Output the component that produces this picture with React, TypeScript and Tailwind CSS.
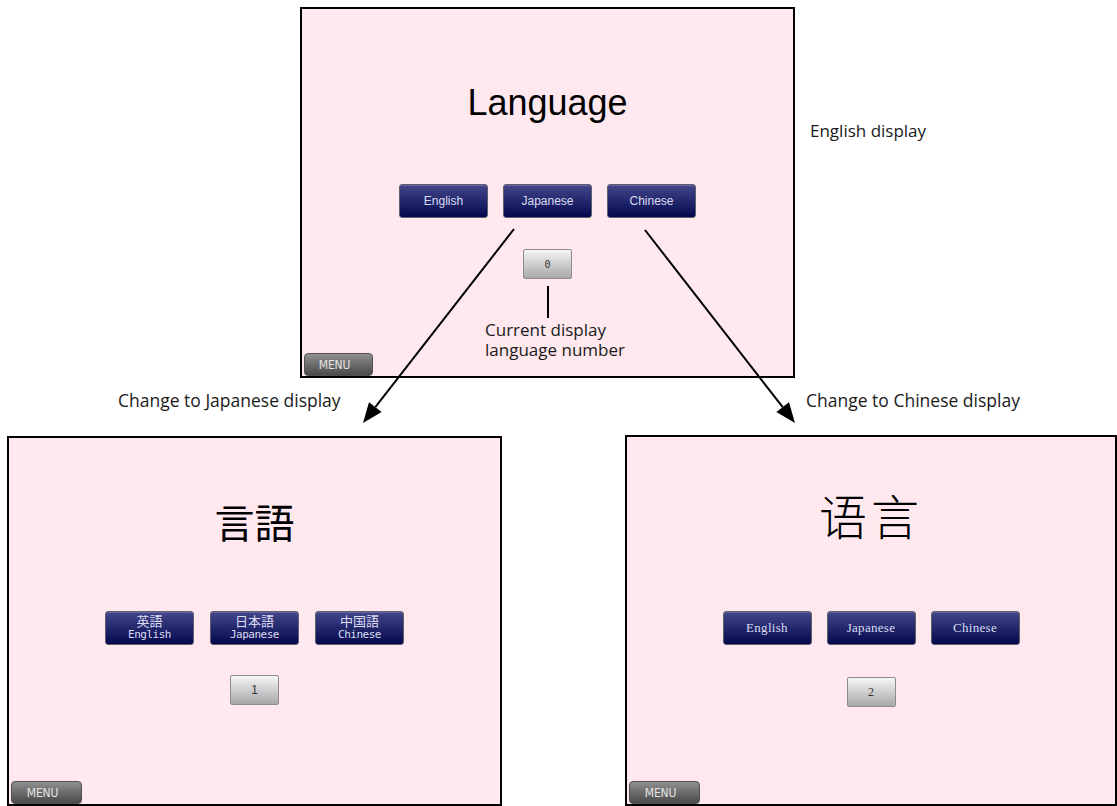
const navyBtn =
  "flex flex-col items-center justify-center w-[89px] h-[34px] rounded-[3px] border border-[#5e5e6e] bg-linear-to-b from-[#45458b] to-[#06064e] text-[#dcdcf2] shadow-[inset_0_1px_0_rgba(255,255,255,0.18)]";

const numBtn =
  "flex items-center justify-center w-[49px] h-[30px] rounded-[2px] border border-[#8c8c8c] bg-linear-to-b from-[#f6f6f8] to-[#a8a8aa] text-[#333]";

function MenuButton({ width }: { width: string }) {
  return (
    <div
      className={`${width} mt-auto ml-[2px] self-start h-[23px] rounded-[4px] border border-[#505050] bg-linear-to-b from-[#909090] to-[#4a4a4a] text-[#e4e4e4] text-[12px] font-['DejaVu_Sans_Condensed','DejaVu_Sans',sans-serif] flex items-center justify-center pr-[8px] tracking-[-0.2px]`}
    >
      MENU
    </div>
  );
}

function EnglishScreen() {
  return (
    <div className="relative flex flex-col items-center w-[495px] h-[371px] border-2 border-black bg-[#ffe8ee] pt-[76px]">
      <h1 className="text-[36px] leading-none text-black font-['Liberation_Sans',Arial,sans-serif]">
        Language
      </h1>
      <div className="mt-[63px] flex gap-[15px] text-[12px] font-['Liberation_Sans',Arial,sans-serif]">
        <div className={navyBtn}>English</div>
        <div className={navyBtn}>Japanese</div>
        <div className={navyBtn}>Chinese</div>
      </div>
      <div className={`${numBtn} mt-[31px] text-[10px] font-['DejaVu_Sans_Mono',monospace]`}>0</div>
      <MenuButton width="w-[69px]" />

      {/* callout */}
      <div className="absolute left-[245px] top-[277px] w-[2px] h-[32px] bg-black" />
      <p className="absolute left-[183px] top-[311px] text-[17px] leading-[20px] text-[#1a1a1a] font-['Open_Sans',sans-serif]">
        Current display
        <br />
        language number
      </p>
    </div>
  );
}

function JapaneseScreen() {
  return (
    <div className="flex flex-col items-center w-[495px] h-[370px] mt-[1px] border-2 border-black bg-[#ffe8ee] pt-[63px]">
      <h1 className="text-[40px] leading-none text-black font-['Noto_Sans_CJK_JP',sans-serif]">
        言語
      </h1>
      <div className="mt-[70px] flex gap-[16px] leading-[14px]">
        {[
          ["英語", "English"],
          ["日本語", "Japanese"],
          ["中国語", "Chinese"],
        ].map(([jp, en]) => (
          <div key={en} className={navyBtn}>
            <span className="font-['Noto_Sans_CJK_JP',sans-serif] text-[13px]">{jp}</span>
            <span className="font-['DejaVu_Sans_Mono',monospace] text-[11px] tracking-[-0.5px]">{en}</span>
          </div>
        ))}
      </div>
      <div className={`${numBtn} mt-[30px] text-[12px] font-['Liberation_Sans',Arial,sans-serif]`}>1</div>
      <MenuButton width="w-[71px]" />
    </div>
  );
}

function ChineseScreen() {
  return (
    <div className="flex flex-col items-center w-[492px] h-[371px] border-2 border-black bg-[#ffe8ee] pt-[53px]">
      <h1 className="text-[48px] leading-none tracking-[4px] font-light text-black font-['Noto_Sans_CJK_SC',serif]">
        语言
      </h1>
      <div className="mt-[73px] flex gap-[15px] text-[13px] tracking-[0.3px] font-['Liberation_Serif',serif]">
        <div className={navyBtn}>English</div>
        <div className={navyBtn}>Japanese</div>
        <div className={navyBtn}>Chinese</div>
      </div>
      <div className={`${numBtn} mt-[32px] text-[12px] font-['Liberation_Serif',serif]`}>2</div>
      <MenuButton width="w-[71px]" />
    </div>
  );
}

export default function App() {
  return (
    <div className="relative w-[1117px] h-[806px] overflow-hidden bg-white text-[#1a1a1a] font-['Open_Sans',sans-serif]">
      <div className="flex pt-[7px] pl-[300px]">
        <EnglishScreen />
        <p className="ml-[15px] mt-[114px] text-[17px] leading-[20px]">English display</p>
      </div>

      <div className="flex h-[57px] pt-[12px] text-[17.5px] leading-[20px]">
        <p className="w-[806px] pl-[118px]">Change to Japanese display</p>
        <p>Change to Chinese display</p>
      </div>

      <div className="flex items-start pl-[7px] gap-[123px]">
        <JapaneseScreen />
        <ChineseScreen />
      </div>

      <svg className="absolute inset-0 pointer-events-none" width="1117" height="806">
        <line x1="514" y1="229" x2="375.3" y2="407.2" stroke="black" strokeWidth="2" />
        <polygon points="363,423 381.6,412.1 369,402.3" fill="black" />
        <line x1="645" y1="230" x2="782.7" y2="407.2" stroke="black" strokeWidth="2" />
        <polygon points="795,423 776.4,412.1 789,402.3" fill="black" />
      </svg>
    </div>
  );
}
